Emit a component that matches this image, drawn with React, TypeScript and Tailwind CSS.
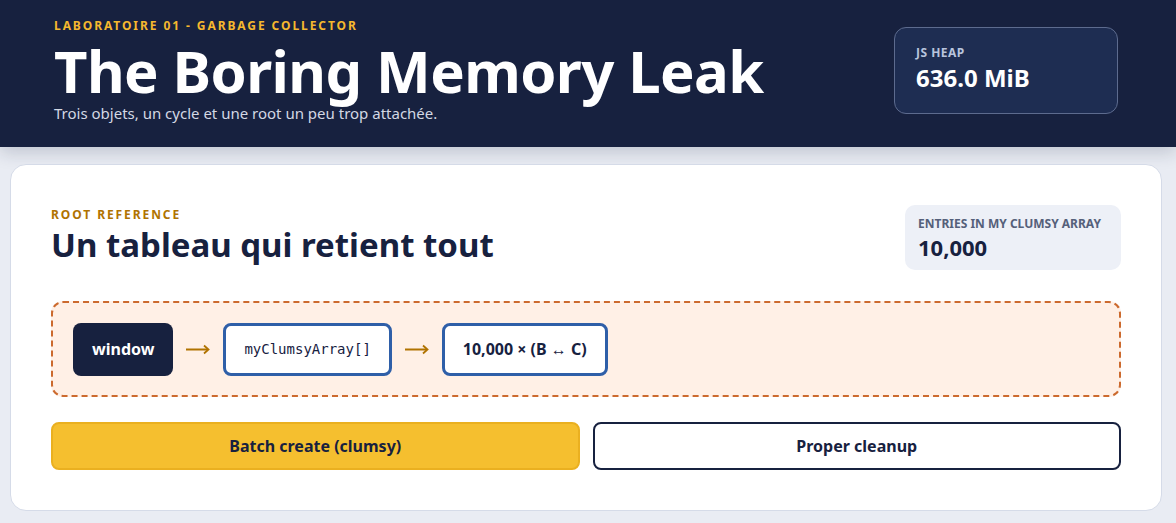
const SANS = "font-['Noto_Sans','Open_Sans',sans-serif]";

function Node({ children, kind }: { children: React.ReactNode; kind: "root" | "mono" | "bold" }) {
  if (kind === "root") {
    return (
      <div className="flex h-[53px] items-center rounded-lg bg-[#17213f] px-[19px] text-[16px] font-bold text-white">
        {children}
      </div>
    );
  }
  return (
    <div
      className={`flex h-[53px] items-center rounded-lg border-[3px] border-[#2f5fa8] bg-white px-[18px] text-[#17213f] ${
        kind === "mono" ? "font-['DejaVu_Sans_Mono',monospace] text-[14px]" : "text-[16px] font-bold"
      }`}
    >
      {children}
    </div>
  );
}

function Arrow() {
  return (
    <svg width="24" height="12" viewBox="0 0 24 12" className="mx-[13px] text-[#b07300]">
      <path d="M0 6.5h22" stroke="currentColor" strokeWidth="2" />
      <path d="M18 2.5l4.5 4-4.5 4" fill="none" stroke="currentColor" strokeWidth="1.8" />
    </svg>
  );
}

export default function App() {
  return (
    <div className={`min-h-[523px] bg-[#e9ecf3] ${SANS}`}>
      <header className="flex h-[147px] items-start justify-between bg-[#17213f] pl-[54px] pr-[58px] shadow-[0_6px_16px_rgba(23,33,63,0.18)]">
        <div className="pt-[17px]">
          <div className="text-[12px] font-bold uppercase tracking-[0.16em] text-[#f5b82e]">
            Laboratoire 01 - Garbage Collector
          </div>
          <h1 className="mt-[6px] text-[58px] leading-[60px] font-bold tracking-[-0.01em] text-white">
            The Boring Memory Leak
          </h1>
          <p className="mt-[2px] text-[15px] leading-[20px] text-[#d3d8e4]">
            Trois objets, un cycle et une root un peu trop attachée.
          </p>
        </div>
        <div className="mt-[27px] flex h-[87px] w-[224px] flex-col justify-center rounded-xl border border-[#5d6b8e] bg-[#1e2d52] px-[21px]">
          <div className="mt-[-4px] text-[12px] font-bold uppercase tracking-[0.04em] text-[#b8c4dd]">JS Heap</div>
          <div className="text-[24px] leading-[32px] font-bold text-white">636.0 MiB</div>
        </div>
      </header>

      <main className="pl-[10px] pr-[14px] pt-[17px] pb-[12px]">
        <section className="rounded-2xl border border-[#d5dbe8] bg-white px-[40px] pt-[41px] pb-[40px]">
          <div className="flex items-start justify-between">
            <div>
              <div className="text-[12px] font-bold uppercase tracking-[0.16em] text-[#b07300]">Root reference</div>
              <h2 className="mt-[1px] text-[33px] leading-[40px] font-bold text-[#17213f]">
                Un tableau qui retient tout
              </h2>
            </div>
            <div className="mt-[-1px] flex h-[65px] w-[216px] flex-col justify-center rounded-[10px] bg-[#edf0f7] px-[13px]">
              <div className="text-[12px] font-bold uppercase text-[#55607a]">Entries in my clumsy array</div>
              <div className="text-[22px] leading-[28px] font-bold text-[#17213f]">10,000</div>
            </div>
          </div>

          <div className="mt-[31px] flex h-[96px] items-center rounded-xl border-2 border-dashed border-[#cc6a2e] bg-[#fff0e6] px-[20px]">
            <Node kind="root">window</Node>
            <Arrow />
            <Node kind="mono">myClumsyArray[]</Node>
            <Arrow />
            <Node kind="bold">10,000 × (B ↔ C)</Node>
          </div>

          <div className="mt-[25px] grid grid-cols-2 gap-[13px]">
            <button className="h-[48px] rounded-lg border-2 border-[#eab020] bg-[#f5bf2f] text-[16px] font-bold text-[#17213f]">
              Batch create (clumsy)
            </button>
            <button className="h-[48px] rounded-lg border-2 border-[#17213f] bg-white text-[16px] font-bold text-[#17213f]">
              Proper cleanup
            </button>
          </div>
        </section>
      </main>
    </div>
  );
}
